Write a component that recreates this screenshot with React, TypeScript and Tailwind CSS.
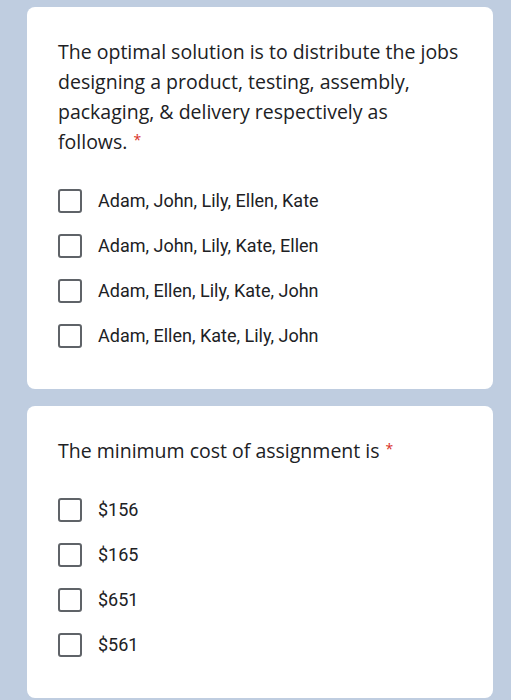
import React from "react"

const questions = [
  {
    title: "The optimal solution is to distribute the jobs\ndesigning a product, testing, assembly,\npackaging, & delivery respectively as\nfollows.",
    options: [
      "Adam, John, Lily, Ellen, Kate",
      "Adam, John, Lily, Kate, Ellen",
      "Adam, Ellen, Lily, Kate, John",
      "Adam, Ellen, Kate, Lily, John",
    ],
  },
  {
    title: "The minimum cost of assignment is",
    options: ["$156", "$165", "$651", "$561"],
  },
]

export default function App() {
  return (
    <div className="min-h-[700px] bg-[#bfcde0] pt-[7px] pb-4 pl-[27px] pr-[18px] flex flex-col gap-[17px]">
      {questions.map((q, i) => (
        <div key={i} className="rounded-lg bg-white pl-[31px] pr-4 pt-[30px] pb-[31px]">
          <p className="whitespace-pre-line text-[19.5px] leading-[30px] text-[#202124] font-['Open_Sans',sans-serif]">
            {q.title}
            <span className="ml-1.5 text-[#d93025] text-[14px] leading-none align-[4px]">*</span>
          </p>
          <div className="mt-[21px] flex flex-col">
            {q.options.map((o) => (
              <label key={o} className="flex h-[45px] items-center gap-4">
                <span className="h-6 w-6 shrink-0 rounded-[3px] border-2 border-[#5f6368]" />
                <span className="text-[18px] text-[#202124] font-['Roboto',sans-serif]">{o}</span>
              </label>
            ))}
          </div>
        </div>
      ))}
    </div>
  )
}
